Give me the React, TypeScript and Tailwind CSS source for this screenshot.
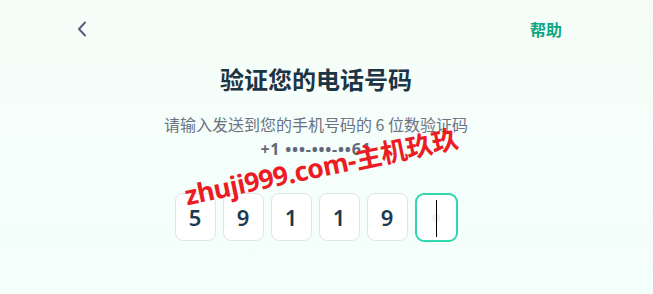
import React from 'react';

export default function App() {
  const digits = ['5', '9', '1', '1', '9'];
  return (
    <div
      className="relative h-[294px] w-[653px] overflow-hidden bg-gradient-to-b from-[#f6fdf9] to-[#f3fffb] pr-[21px]"
      style={{ fontFamily: '"Noto Sans", "Noto Sans CJK SC", sans-serif' }}
    >
      <div className="flex h-[58px] items-center justify-between pl-[74px] pr-[70px]">
        <button className="flex h-[24px] w-[16px] items-center justify-center text-[#56607a]">
          <svg width="12" height="16" viewBox="0 0 12 16" fill="none">
            <path d="M9 1.5L3 8l6 6.5" stroke="currentColor" strokeWidth="2" strokeLinecap="round" strokeLinejoin="round" />
          </svg>
        </button>
        <span className="text-[16px] font-bold text-[#0fa683]" style={{ fontFamily: '"Noto Sans CJK SC", sans-serif' }}>帮助</span>
      </div>

      <div className="flex flex-col items-center">
        <h1 className="mt-[4px] text-[24px] font-bold leading-[34px] text-[#1d3444]" style={{ fontFamily: '"Noto Sans CJK SC", sans-serif' }}>
          验证您的电话号码
        </h1>
        <p className="mt-[17px] text-[16px] leading-[22px] text-[#6b7384]" style={{ fontFamily: '"Noto Sans CJK SC", sans-serif' }}>
          请输入发送到您的手机号码的 6 位数验证码
        </p>
        <p className="mt-[2px] text-[16px] font-bold leading-[24px] tracking-[0.8px] text-[#5f6779]">+1 •••-•••-••61</p>

        <div className="mt-[32px] flex gap-[7px]">
          {digits.map((d, i) => (
            <div
              key={i}
              className="flex h-[48px] w-[41px] items-center justify-center rounded-[8px] border border-[#dde5ea] bg-white text-[22px] font-semibold text-[#1b3a50]"
            >
              {d}
            </div>
          ))}
          <div className="relative flex h-[49px] w-[43px] items-center justify-center rounded-[9px] border-2 border-[#30d6ae] bg-white">
            <span className="h-[8px] w-[8px] rounded-full bg-[#f1f2f3]" />
            <span className="absolute left-[19px] top-[5px] h-[37px] w-px bg-black" />
          </div>
        </div>
      </div>

      <div
        className="pointer-events-none absolute left-[321px] top-[167px] -translate-x-1/2 -translate-y-1/2 -rotate-[12deg] whitespace-nowrap text-[26.5px] font-bold leading-none tracking-[-0.5px] text-[#ec1c24]"
        style={{ fontFamily: '"Noto Sans", "Noto Sans CJK SC", sans-serif' }}
      >
        zhuji999.com-主机玖玖
      </div>
    </div>
  );
}
